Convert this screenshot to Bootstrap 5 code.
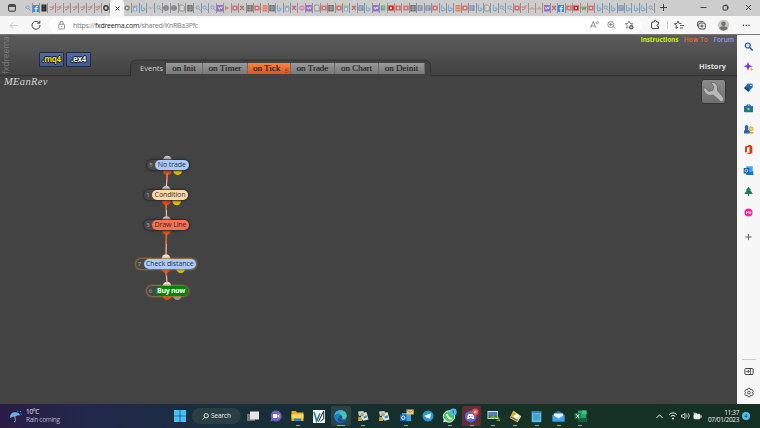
<!DOCTYPE html>
<html lang="en">
<head>
  <meta charset="UTF-8" />
  <meta name="viewport" content="width=device-width, initial-scale=1.0" />
  <title>fxDreema - MEanRev</title>
  <link href="https://cdn.jsdelivr.net/npm/bootstrap@5.3.2/dist/css/bootstrap.min.css" rel="stylesheet">
  <style>
    body {
      width: 760px;
      height: 428px;
      font-family: "Open Sans", sans-serif;
      font-size: 7px;
      line-height: 1;
      background: #434343;
    }
    svg { display: block; flex: none; }
    .line-icon { fill: none; stroke: currentColor; stroke-width: 1; }

    /* Browser chrome */
    .tab-strip { height: 16px; background: #cdcdcd; color: #333; }
    .tab-menu { width: 25px; }
    .tabs-left { width: 85px; }
    .tabs-mid { width: 78px; }
    .tabs-right { width: 453px; }
    .mini-tab { flex: 1 1 0; min-width: 0; height: 10px; border-right: 1px solid #929292; }
    .mini-tab svg { opacity: .88; }
    .live-tab { width: 14px; height: 16px; background: #f7f7f7; border-radius: 3px 3px 0 0; }
    .tool-row { height: 19px; background: #f7f7f7; border-bottom: 1px solid #777; color: #444; }
    .tool-nav { width: 49px; padding-left: 9px; gap: 12px; }
    .address { width: 593px; height: 15px; background: #fff; border-radius: 8px; padding: 0 7px 0 8px; }
    .address-text { color: #75797d; font-size: 7px; letter-spacing: -.25px; margin-left: 7px; }
    .address-text b { color: #222; font-weight: 400; }

    /* Editor page */
    .editor { width: 737px; height: 369px; background: #434343; }
    .editor-top { height: 41px; background: linear-gradient(#5c5c5c, #414141); }
    .editor-frame { z-index: 0; }
    .layer { position: relative; z-index: 1; }
    .brand { width: 12px; height: 39px; writing-mode: vertical-rl; transform: rotate(180deg); color: #7d7d7d; font-size: 8.4px; text-align: left; line-height: 12px; }
    .file-btns { padding: 17px 0 0 27px; gap: 2px; width: 128px; }
    .file-btn { width: 25px; height: 15px; background: linear-gradient(#4d6ca8, #3e5a92); border: 1px solid #252d3c; border-radius: 1px; font-size: 8px; line-height: 12px; font-weight: 700; letter-spacing: -.25px; color: #eee; text-align: center;
      text-shadow: -1px 0 #111, 1px 0 #111, 0 -1px #111, 0 1px #111; }
    .mq { color: #f4e01c; }
    .event-row { padding-top: 28px; width: 285px; }
    .event-title { width: 26px; color: #d0d0d0; font-size: 7.5px; line-height: 10px; }
    .event-tab { height: 11px; background: linear-gradient(#999, #797979); border-right: 1px solid #696969; color: #333; font-family: "Liberation Serif", serif; font-size: 9px; line-height: 11px; text-align: center; text-shadow: 0 0 .5px #333; white-space: nowrap; }
    .event-on { background: linear-gradient(#f98448, #e2531a); text-align: left; padding-left: 5px; }
    .w-init { width: 37px; } .w-timer { width: 45px; } .w-tick { width: 43px; } .w-trade { width: 44px; } .w-deinit { width: 46px; }
    .top-right { width: 312px; padding-right: 3px; }
    .top-links { gap: 5.5px; padding-top: 1px; font-size: 6.5px; line-height: 7px; font-weight: 700; letter-spacing: -.14px; }
    .link-a { color: #c2f000; } .link-b { color: #ee6238; font-weight: 600; letter-spacing: .1px; } .link-c { color: #9694ee; font-weight: 600; letter-spacing: 0; }
    .history { color: #ddd; font-weight: 700; font-size: 7.4px; line-height: 9px; padding: 19px 8px 0 0; }
    .project { font-family: "Liberation Serif", serif; font-style: italic; font-size: 10.5px; line-height: 12px; color: #d4d4d4; padding-left: 4px; letter-spacing: .35px; }
    .wrench { margin: 3px 11px 0 0; }

    /* Blocks on the canvas */
    .wires { position: absolute; left: 0; top: 0; }
    .block { position: absolute; display: flex; height: 10px; border-radius: 5px; background: #484848; box-shadow: 0 0 2px 1px #292929; color: #aaa; font-size: 6px; line-height: 10px; z-index: 2; }
    .block-no { text-align: center; width: 8px; }
    .block-name { flex: 1; border-radius: 5px; font-size: 7px; line-height: 10px; letter-spacing: -.1px; text-align: center; color: #263344; white-space: nowrap; }
    .picked { box-shadow: 0 0 2px 1px #9c7837; }
    .blue { background: #abc9fb; } .cream { background: #ffd9a6; } .coral { background: #fa7350; color: #431b18; } .green { background: #078307; color: #fff; font-weight: 700; letter-spacing: -.3px; }
    .b1 { left: 147px; top: 125px; width: 41.5px; }
    .b2 { left: 144px; top: 155px; width: 44px; }
    .b3 { left: 144px; top: 185px; width: 45px; }
    .b4 { left: 135.5px; top: 223.5px; width: 60.5px; }
    .b5 { left: 146.5px; top: 251px; width: 41px; }

    /* Edge sidebar */
    .side { width: 23px; height: 369px; background: #f7f7f7; padding-top: 5.5px; color: #444; }
    .side-list { gap: 9.8px; }
    .side-end { gap: 10px; padding: 6px 0; border-top: 1px solid #ccc; width: 14px; }

    /* Windows taskbar */
    .taskbar { height: 24px; background: linear-gradient(90deg, #2b1c47 0, #21284a 90px, #192e3e 220px, #15302f 340px, #173225 560px, #142f24 760px); color: #eee; font-size: 6.5px; }
    .weather { width: 174px; padding-left: 10px; gap: 4px; line-height: 8px; letter-spacing: -.32px; }
    .weather span + span { color: #b9b9c8; }
    .search-box { width: 49px; height: 16px; border-radius: 8px; background: #293f43; margin: 0 2px 0 6px; gap: 2px; font-size: 6.5px; letter-spacing: -.1px; }
    .app { width: 21.77px; height: 24px; flex: none; position: relative; }
    .app.running::after { content: ""; position: absolute; bottom: 2px; left: 9px; width: 4px; height: 1px; background: #9aa; }
    .app.current::before { content: ""; position: absolute; inset: 2px 1px; background: #ffffff18; border-radius: 2px; }
    .app.current::after { left: 7px; width: 8px; background: #55c3f5; }
    .app.alert-app::before { content: ""; position: absolute; inset: 2px 1px; background: #632d35; border-radius: 2px; }
    .app svg { position: relative; }
    .tray { gap: 2px; }
    .clock { width: 35px; font-size: 6.5px; line-height: 7.5px; letter-spacing: -.35px; }
    .notice { width: 8px; height: 8px; background: #4cc2f5; color: #123; font-size: 5px; margin: 0 10px 0 1px; }
  </style>
</head>
<body class="overflow-hidden">

<!-- Favicon shapes used in the tab strip -->
<svg width="0" height="0" class="position-absolute">
  <symbol id="fs" viewBox="0 0 6 8"><circle cx="2.6" cy="3.4" r="1.6" fill="none" stroke="#6d9cc8" stroke-width=".9"/><path d="M3.8 4.7 5.6 6.6" stroke="#6d9cc8"/></symbol>
  <symbol id="ff" viewBox="0 0 6 8"><path d="M0 1h6v7H0z" fill="#1685f0"/><path d="M5 2.2H4q-1 0-1 1V8M1.6 4.6h3" fill="none" stroke="#fff" stroke-width="1.1"/></symbol>
  <symbol id="fk" viewBox="0 0 6 8"><path d="M.5.5h5v7h-5z" fill="#161616"/><path d="M2 2h2M2 5h2" stroke="#777" stroke-width=".7"/></symbol>
  <symbol id="fz" viewBox="0 0 6 8"><path d="m.5 3 2 .3L5.5 1.5M1 6l2.3-.7L5 3.3" fill="none" stroke="#d3655c" stroke-width=".9"/><path d="m3 4 2-1" stroke="#6a9a68" stroke-width=".7"/></symbol>
  <symbol id="fo" viewBox="0 0 6 8"><circle cx="3" cy="4" r="2.2" fill="none" stroke="#222" stroke-width="1.4"/></symbol>
  <symbol id="fc" viewBox="0 0 6 8"><circle cx="3" cy="4" r="2" fill="none" stroke="#777" stroke-width="1.3"/></symbol>
  <symbol id="fd" viewBox="0 0 6 8"><path d="M.6 1h4.8v6.5H.6z" fill="#88acd9"/><path d="M1 1.6h4" stroke="#d6bd5e" stroke-width="1"/><path d="M2 4h2v2.5H2z" fill="#d5e0ee"/></symbol>
  <symbol id="fb" viewBox="0 0 6 8"><path d="M1.5.8v5.4l1.3.8 2-1.2V4.6L2.7 3.8" fill="none" stroke="#66a9e0" stroke-width="1.1"/></symbol>
  <symbol id="fw" viewBox="0 0 6 8"><path d="m.3 4.3 1.3-1 1.5 1.2 1.3-1.2 1.3 1" fill="none" stroke="#809ecb" stroke-width=".8"/></symbol>
  <symbol id="fg" viewBox="0 0 6 8"><circle cx="3" cy="4" r="2.7" fill="#5f5f5f"/><path d="M.8 3h4.4M.8 5h4.4M3 1.5v5" stroke="#bbb" stroke-width=".6"/></symbol>
  <symbol id="fp" viewBox="0 0 6 8"><path d="M.8 1h3l1.5 1.5V7H.8z" fill="#d8d8d8" stroke="#777" stroke-width=".7"/></symbol>
  <symbol id="fe" viewBox="0 0 6 8"><path d="M.3 1h5.4v6.4H.3z" fill="#5c5c5c"/><path d="M1 3h4M1 5.2h4M3 1v6" stroke="#b5b5b5" stroke-width=".7"/></symbol>
  <symbol id="fv" viewBox="0 0 6 8"><path d="M0 1h6v6.5H0z" fill="#9465c8"/><path d="m1 3 1.3 2.3L3.4 3l.8 2 1-2.4" fill="none" stroke="#eee" stroke-width=".8"/></symbol>
  <symbol id="fa" viewBox="0 0 6 8"><path d="m1 1.5 4 2.5-4 2.5z" fill="#d9855a"/></symbol>
  <symbol id="fr" viewBox="0 0 6 8"><path d="M.3 1.5h5.4v5H.3z" fill="#dc6464"/><path d="M2 3h2v2H2z" fill="#f0c3c3"/></symbol>
  <symbol id="fR" viewBox="0 0 6 8"><path d="M.3 1.5h5.4v5H.3z" fill="#f00000"/><path d="M2 3h2v2H2z" fill="#fff"/></symbol>
  <symbol id="fx" viewBox="0 0 6 8"><path d="m1 2 4 4M5 2 1 6" stroke="#c05f68" stroke-width="1.1"/><path d="M3 1.5v2" stroke="#6474a5"/></symbol>
  <symbol id="fy" viewBox="0 0 6 8"><path d="M.5 1h5v6.5h-5z" fill="#dd7959"/><path d="M1 3h4M1 5.5h4" stroke="#e8c08d" stroke-width=".7"/></symbol>
  <symbol id="fm" viewBox="0 0 6 8"><circle cx="3" cy="4" r="2.6" fill="#da7cb1"/><path d="M1.5 4h3" stroke="#f2d2e3"/></symbol>
  <symbol id="fq" viewBox="0 0 6 8"><path d="M.4 1.3h5.2v5.4H.4z" fill="#7289b5"/><path d="M1.4 3h3M1.4 5h2" stroke="#ccd7ea" stroke-width=".8"/></symbol>
  <symbol id="fn" viewBox="0 0 6 8"><path d="M.7 1.5h4.6v5H.7z" fill="#64a37c"/><path d="M2 3h2v2" fill="none" stroke="#aad0b9" stroke-width=".8"/></symbol>
  <symbol id="fh" viewBox="0 0 6 8"><path d="M.5 4.8h5M2 4l2-1" stroke="#dd8262" stroke-width=".9"/></symbol>
  <symbol id="fl" viewBox="0 0 6 8"><path d="m.8 2.5 1 3L3 3.7l1.2 1.8 1-3" fill="none" stroke="#43a65c" stroke-width="1.2"/><path d="M3 2.5v2" stroke="#d44"/></symbol>
</svg>

<div class="tab-strip d-flex align-items-center">
  <div class="tab-menu ps-2"><svg width="8" height="8" viewBox="0 0 8 8" class="line-icon"><rect x=".6" y=".6" width="6.8" height="6.6" rx="1"/><path d="M.6 2h6.8" stroke-width="1.6"/></svg></div>
  <div class="tabs-left d-flex" data-tabs="sfkzzzzzzzo"></div>
  <div class="live-tab d-flex align-items-center justify-content-center"><svg width="5" height="5" viewBox="0 0 5 5" class="line-icon"><path d="m.6.6 3.8 3.8M4.4.6.6 4.4"/></svg></div>
  <div class="tabs-mid d-flex" data-tabs="cdbwsggpes"></div>
  <div class="tabs-right d-flex" data-tabs="ssvarxeryebdxmvprerdxqbvnRrreqqrbbyrqbpbssrzhhvxfrRlrbsbqbbbs"></div>
  <svg width="105" height="16" viewBox="655 0 105 16" class="line-icon"><path d="M660 7.5h7M663.5 4v7M700.5 7.5h6M746 5l5 5M751 5l-5 5" stroke-width=".9"/><rect x="723" y="5.7" width="4.4" height="4.4" rx="1"/><path d="M724.5 5.2q3.8-1 3.8 3.3" stroke-width=".8"/></svg>
</div>

<div class="tool-row d-flex align-items-center">
  <div class="tool-nav d-flex align-items-center">
    <svg width="10" height="9" viewBox="0 0 10 9" class="line-icon"><path d="M9 4.5H1M4.5 1 1 4.5 4.5 8" stroke="#c9c9c9"/></svg>
    <svg width="10" height="10" viewBox="0 0 10 10" class="line-icon"><path d="M8.3 3A4 4 0 1 0 9 5M8.800.6v2.6H6.2"/></svg>
  </div>
  <div class="address d-flex align-items-center">
    <svg width="9" height="9" viewBox="0 0 9 9" class="line-icon"><rect x="1.7" y="3.3" width="5.8" height="4.6" rx=".7" stroke="#777" stroke-width=".8"/><path d="M3 3.2V2a1.6 1.6 0 0 1 3.2 0v1.2M4.6 5v1" stroke="#777" stroke-width=".8"/></svg>
    <span class="address-text">https://<b>fxdreema.com</b>/shared/KnRBa3Pfc</span>
    <svg width="48" height="12" viewBox="587 19 48 12" class="line-icon ms-auto"><path d="m590.5 28 2.7-6.5L596 28M591.4 26h3.6M596 22q1 1 0 2M597.5 21q1.5 1.5 0 3.300M613.3 26.7l2 2M609 24.500h3.600M610.8 22.700v3.600" stroke="#666" stroke-width=".7"/><circle cx="610.8" cy="24.5" r="3" stroke="#666" stroke-width=".7"/><path d="m629 21 1.1 2.400 2.700.3-2 1.800M629 21l-1.100 2.400-2.700.3 2 1.800-.5 2.700 2-1" stroke="#666" stroke-width=".8"/><circle cx="631.3" cy="27.2" r="2.2" fill="#555" stroke="none"/><path d="M631.3 26v2.400M630.1 27.200h2.400" stroke="#fff" stroke-width=".6"/></svg>
  </div>
  <svg width="118" height="14" viewBox="642 18 118 14" class="line-icon">
    <path d="M652 22h2.200q-.2-1.700 1.100-1.700t1.200 1.700h2v2.200q-1.500 0-1.500 1.200t1.500 1.200v2h-6.300l-.7-1.600v-3.200z"/>
    <path d="M667.5 21v8" stroke="#ccc"/>
    <path d="m678 21 1 2.400h2.500M678 21l-1.100 2.400-2.400.3 1.800 1.900-.4 2.800 2.200-1.200M680 25.500h4M680 28h3" stroke-width=".9"/>
    <rect x="698.8" y="23" width="6.5" height="6" rx="1.2"/><path d="M697.6 26.500v-3.300q0-1.800 1.800-1.800h4M702 24.300v3.400M700.3 26h3.400" stroke-width=".9"/>
    <g stroke="none"><circle cx="723.5" cy="25.3" r="5.6" fill="#c9c7c5"/><circle cx="723.5" cy="23.7" r="2.2" fill="#75706c"/><path d="M719.3 28.600q.5-2.300 4.200-2.300t4.200 2.300q-4.200 4.200-8.400 0" fill="#75706c"/>
    <g fill="#333"><circle cx="743.4" cy="25.3" r=".7"/><circle cx="746.2" cy="25.3" r=".7"/><circle cx="749" cy="25.3" r=".7"/></g></g>
  </svg>
</div>

<div class="d-flex">
  <main class="editor position-relative">
    <div class="editor-top d-flex">
      <svg class="position-absolute top-0 start-0 editor-frame" width="737" height="48" viewBox="0 0 737 48"><path d="M0 48V40.700h130.500V32q0-7 7-7h286q7 0 7 7v8.700H737V48z" fill="#434343"/><path d="M0 40.700h130.500V32q0-7 7-7h286q7 0 7 7v8.700H737" fill="none" stroke="#303030"/></svg>
      <div class="brand layer">fxdreema</div>
      <div class="file-btns layer d-flex"><div class="file-btn mq">.mq4</div><div class="file-btn">.ex4</div></div>
      <div class="event-row layer d-flex">
        <div class="event-title">Events</div>
        <div class="event-tab w-init">on Init</div>
        <div class="event-tab w-timer">on Timer</div>
        <div class="event-tab event-on w-tick d-flex">on Tick<svg width="6" height="11" viewBox="0 0 6 11" class="line-icon ms-auto"><path d="M1.500 6h3M1.500 6v1.600q2.800-.7 2.700 1T.8 9.500" stroke="#8f4c2e" stroke-width=".8"/></svg></div>
        <div class="event-tab w-trade">on Trade</div>
        <div class="event-tab w-trade">on Chart</div>
        <div class="event-tab w-deinit">on Deinit</div>
      </div>
      <div class="top-right layer d-flex flex-column align-items-end">
        <div class="top-links d-flex"><span class="link-a">Instructions</span><span class="link-b">How To</span><span class="link-c">Forum</span></div>
        <div class="history">History</div>
      </div>
    </div>
    <div class="layer d-flex justify-content-between">
      <div class="project">MEanRev</div>
      <svg class="wrench" width="25" height="25" viewBox="0 0 25 25"><defs><linearGradient id="wg" x2="0" y2="1"><stop stop-color="#8b8b8b"/><stop offset="1" stop-color="#707070"/></linearGradient></defs><rect x=".5" y=".5" width="24" height="24" rx="2.5" fill="url(#wg)" stroke="#353535"/><path d="M9.800 3.300q3.200-.5 5.600 2 2 2.500 1 6l6.300 7.700q1 3-2.500 4l-8-7q-4.500 1.300-7.700-1.600Q1.800 11.500 3 7.800l5 4.700 3.900-1.300.7-3.600z" fill="#b9b9b9" stroke="#5e5e5e" stroke-width=".7"/></svg>
    </div>

    <svg class="wires" width="220" height="300" viewBox="0 35 220 300">
      <g fill="#c9bfcc"><circle cx="167.3" cy="160" r="4.3"/><circle cx="166.3" cy="190" r="4.3"/><circle cx="166.5" cy="220.5" r="4.3"/></g>
      <g fill="#f5dfd3"><circle cx="166" cy="258.5" r="4.3"/><circle cx="167" cy="286" r="4.3"/></g>
      <g fill="#de4e10"><circle cx="167.3" cy="170.7" r="4.3"/><circle cx="166.3" cy="201" r="4.3"/><circle cx="166.5" cy="230.5" r="4.3"/><circle cx="166" cy="268.7" r="4.3"/><circle cx="167" cy="295.7" r="4.3"/></g>
      <g fill="#e2b809"><circle cx="177.7" cy="170.7" r="4.3"/><circle cx="176.7" cy="201" r="4.3"/><circle cx="180.7" cy="268.7" r="4.3"/></g>
      <circle cx="177.3" cy="295.7" r="4.3" fill="#9a9a94"/>
      <g stroke="#efb29b" stroke-width="1.3"><path d="m167.3 174-1 13M166.3 205l.2 12M166.5 234l-.5 21M166.2 272l.8 11"/></g>
      <g stroke="#df6535" stroke-width="1.3"><path d="m167.3 173-.5 6M166.3 204v6M166.5 234l-.2 10M166.2 271l.4 5"/></g>
    </svg>
    <div class="block b1"><span class="block-no">5</span><span class="block-name blue">No trade</span></div>
    <div class="block b2"><span class="block-no">1</span><span class="block-name cream">Condition</span></div>
    <div class="block b3"><span class="block-no">3</span><span class="block-name coral">Draw Line</span></div>
    <div class="block b4 picked"><span class="block-no">7</span><span class="block-name blue">Check distance</span></div>
    <div class="block b5 picked"><span class="block-no">6</span><span class="block-name green">Buy now</span></div>
  </main>

  <aside class="side d-flex flex-column align-items-center">
    <div class="side-list d-flex flex-column">
      <svg width="11" height="11" viewBox="0 0 11 11"><circle cx="4.8" cy="4.5" r="2.5" fill="#cfe6fb" stroke="#2355b4" stroke-width="1.2"/><path d="m6.700 6.500 3 3" stroke="#2355b4" stroke-width="1.5"/></svg>
      <svg width="11" height="11" viewBox="0 0 11 11"><path d="M5 .8 6.200 4 9.500 5.200 6.200 6.400 5 9.700 3.800 6.400.6 5.200 3.800 4z" fill="#7a3be0"/><path d="m8.500 6.300.6 1.500 1.500.6-1.500.6-.6 1.500-.6-1.500-1.500-.6 1.500-.6z" fill="#efb631"/></svg>
      <svg width="11" height="11" viewBox="0 0 11 11"><path d="m5 1.500 4.500.2.300 3.600-4.600 4.400L1.200 6z" fill="#1c65b8"/><path d="m1.200 6 4 3.700 1.500-1.400-4-3.700z" fill="#124780"/><circle cx="8" cy="3.4" r=".8" fill="#e5e5e5"/></svg>
      <svg width="11" height="11" viewBox="0 0 11 11"><path d="M4 3V2h3.200v1" fill="none" stroke="#155d8c"/><rect x="1" y="3" width="9" height="6.3" rx=".8" fill="#137d83"/><path d="M1 3h9v3H1z" fill="#1c70b9"/><path d="M4.500 5h2v2h-2z" fill="#ebbc38"/></svg>
      <svg width="11" height="11" viewBox="0 0 11 11"><path d="M3.600 1q2 .3 1.800 2.500L5 5.500l1.800 1.200v2.800H1V6.700l1.200-1.200-.5-2Q1.600 1.300 3.600 1" fill="#2265bd"/><circle cx="8" cy="4.8" r="2.5" fill="#eeb942"/><circle cx="8" cy="4.8" r=".9" fill="#fae3a0"/><path d="M6.800 9.500h3.500V8.200H6.800z" fill="#d28b24"/></svg>
      <svg width="11" height="11" viewBox="0 0 11 11"><path d="M6.500.8 9.300 2v7l-2.800 1.200L2.500 9l4-.2V2.700L4 3.500v4.300l-2 .8V2.700z" fill="#dd3c16"/></svg>
      <svg width="11" height="11" viewBox="0 0 11 11"><path d="M3.300 1.300H9.700v8H3.300z" fill="#38a6e8"/><path d="m3.300 6 3.500 1.700L10.300 6v4h-7z" fill="#1b71c4"/><path d="M.7 3h5.500v5.500H.7z" fill="#0b5dab"/><circle cx="3.4" cy="5.7" r="1.4" fill="none" stroke="#fff" stroke-width=".8"/></svg>
      <svg width="11" height="11" viewBox="0 0 11 11"><path d="M5.500.8 8 4H7.300L9.800 8H1.300L3.800 4H3z" fill="#157f57"/><path d="M5 8h1.200v2.300H5z" fill="#6f5943"/></svg>
      <svg width="11" height="11" viewBox="0 0 11 11"><circle cx="5.5" cy="5.5" r="4" fill="#ee249e"/><path d="M3.500 7V4.500L5 6l1-1.800v2.600l1.700-2.300v2.300" fill="none" stroke="#ffd7ef" stroke-width=".8"/></svg>
      <svg width="11" height="11" viewBox="0 0 11 11" class="line-icon mt-1"><path d="M5.500 1.800v6.400M2.300 5h6.400" stroke="#666"/></svg>
    </div>
    <div class="side-end mt-auto d-flex flex-column align-items-center">
      <svg width="10" height="11" viewBox="0 0 10 11" class="line-icon"><rect x=".9" y="2.5" width="8.2" height="6" rx="1"/><path d="M6.500 2.500v6M2 5.500h3M4 4l1.300 1.500L4 7" stroke-width=".8"/></svg>
      <svg width="10" height="11" viewBox="0 0 10 11" class="line-icon"><path d="m4 1.300 2 0 .5 1.500 1.600-.3L9.300 4.500 8.200 5.600 9.300 7 8.100 8.700l-1.600-.4L6 9.800H4l-.5-1.500-1.600.4L.7 7l1.100-1.400L.7 4.500l1.200-2 1.600.3z" stroke-width=".9"/><circle cx="5" cy="5.6" r="1.4" stroke-width=".9"/></svg>
    </div>
  </aside>
</div>

<footer class="taskbar d-flex align-items-center">
  <div class="weather d-flex align-items-center">
    <svg width="12" height="13" viewBox="0 0 12 13"><path d="M0 8Q-.2 3.200 4 2.300t6.500 3.200Q7.800 5 5.500 6.300 3 6.300 0 8" fill="#62b5f2"/><path d="m4.800 6 .6 4.600q.1 1.500-1.400 1.200" fill="none" stroke="#9fb0c0" stroke-width=".9"/><path d="m7.500.8.700 1M10 .8l.7 1M10.700 3.500l.7 1" stroke="#5aaeff"/></svg>
    <div class="d-flex flex-column"><span>10°C</span><span>Rain coming</span></div>
  </div>
  <svg width="12" height="12" viewBox="0 0 12 12"><path d="M0 0h5.700v5.700H0zM6.300 0H12v5.700H6.300zM0 6.300h5.700V12H0zM6.300 6.300H12V12H6.300z" fill="#46c1f5"/></svg>
  <div class="search-box d-flex align-items-center justify-content-center"><svg width="7" height="7" viewBox="0 0 7 7" class="line-icon"><circle cx="4.2" cy="2.8" r="2.2"/><path d="M2.600 4.400.5 6.500"/></svg>Search</div>

  <div class="app d-flex align-items-center justify-content-center"><svg width="13" height="12" viewBox="0 0 13 12"><path d="M0 4h8v7H0z" fill="#777"/><path d="M3 1.500h9v8H3z" fill="#e4e4e4"/></svg></div>
  <div class="app d-flex align-items-center justify-content-center"><svg width="12" height="12" viewBox="0 0 12 12"><path d="M6 .5a5.500 5.500 0 1 1-3 10L.5 11.500l.7-3A5.500 5.500 0 0 1 6 .5" fill="#7461c2"/><path d="M3 4h4.200v4H3zM7.600 5.500 9.300 4v4L7.600 6.500z" fill="#fff"/></svg></div>
  <div class="app running d-flex align-items-center justify-content-center"><svg width="13" height="12" viewBox="0 0 13 12"><path d="M.5 1h4.300L6 2.400h6.500V11H.5z" fill="#edab1e"/><path d="M.5 4.200h12v4.300H.5z" fill="#ffd957"/><path d="M3 8.500h7V11H3z" fill="#2586d6"/></svg></div>
  <div class="app d-flex align-items-center justify-content-center"><svg width="12" height="13" viewBox="0 0 12 13"><path d="M0 0h12v13H0z" fill="#f4f7f6"/><path d="m1 2 2.700 9L7 3.500" fill="none" stroke="#247e8c" stroke-width="1.6"/><path d="M5.500 11.500 10.700 1v8q-1.800 1-3 2.500" fill="none" stroke="#152b31"/></svg></div>
  <div class="app running current d-flex align-items-center justify-content-center"><svg width="13" height="13" viewBox="0 0 13 13"><circle cx="6.5" cy="6.5" r="6.3" fill="#1683c9"/><path d="M.3 5.500Q1.500.2 7 .2q5.700.6 5.800 5.800-.4 3-3.800 2.800Q7 8.300 8 7 8 4 5 3.500 2 3.300.3 5.500" fill="#48c4b0"/><path d="M.3 5.500Q1.500.2 7 .2q2.500.3 4 2Q7.500 1 4 3 1.600 3.500.3 5.500" fill="#39a8e6"/><path d="M5.200 7q.5 3.500 6.500 3Q8.500 13.500 4.500 11.500 2.800 9 5.200 7" fill="#125193"/><path d="M5.500 6.500Q5.800 8.500 8 8.700q-.9-.9 0-1.700-.8-2-2.500-.5" fill="#173033"/></svg></div>
  <div class="app running d-flex align-items-center justify-content-center"><svg width="12" height="12" viewBox="0 0 12 12"><path d="m1 1.500 5.500-.5 1 4L2 6z" fill="#b9d7de"/><path d="m6 3 3.500-1 2 7.500-5 1.200-3-3.200z" fill="#dce3de"/><circle cx="5.200" cy="4.500" r="1.700" fill="#d19a4d"/><path d="M1.500 6.500 5 8v3H1z" fill="#d8a643"/><path d="M6.500 6.500 9.500 5l.5 2.500-3 1z" fill="#4389b5"/></svg></div>
  <div class="app d-flex align-items-center justify-content-center"><svg width="12" height="12" viewBox="0 0 12 12"><path d="m1 1.500 5.500-.5 1 4L2 6z" fill="#b9d7de"/><path d="m6 3 3.500-1 2 7.500-5 1.200-3-3.200z" fill="#dce3de"/><circle cx="5.200" cy="4.500" r="1.700" fill="#d19a4d"/><path d="M1.500 6.500 5 8v3H1z" fill="#d8a643"/><path d="M6.500 6.500 9.500 5l.5 2.500-3 1z" fill="#4389b5"/></svg></div>
  <div class="app running d-flex align-items-center justify-content-center"><svg width="15" height="14" viewBox="0 0 15 14"><path d="M3 4h9v8H3z" fill="#40a5e4"/><path d="M1 5.500h6.500V12H1z" fill="#1366b9"/><circle cx="4.3" cy="8.7" r="1.7" fill="none" stroke="#fff"/><path d="M7.500.5h7.200v5H7.500z" fill="#edc285"/><path d="m7.500.7 3.600 2.700L14.700.7" fill="none" stroke="#a67542" stroke-width=".7"/></svg></div>
  <div class="app d-flex align-items-center justify-content-center"><svg width="12" height="12" viewBox="0 0 12 12"><circle cx="6" cy="6" r="5.5" fill="#2799d4"/><path d="m2 6 7-2.800L8 9 5.800 7.400 4.600 8.600 4.400 7z" fill="#fff"/></svg></div>
  <div class="app running d-flex align-items-center justify-content-center"><svg width="15" height="16" viewBox="0 0 15 16"><circle cx="7" cy="8.5" r="5.7" fill="#43c85e" stroke="#eefaf0"/><path d="M1 14.500 2.300 10.500 5 13z" fill="#eefaf0"/><path d="M4.800 6q1 4.400 5 5" fill="none" stroke="#fff" stroke-width="1.7"/><circle cx="11.3" cy="4" r="3.4" fill="#4abdf0"/><path d="M11.300 2.500v3" stroke="#13374b" stroke-width=".8"/></svg></div>
  <div class="app running alert-app d-flex align-items-center justify-content-center"><svg width="15" height="16" viewBox="0 0 15 16"><circle cx="6.7" cy="8.5" r="5.7" fill="#5868e5"/><path d="M3.200 10.700q0-3.700 1.500-4.600h4q1.500.9 1.500 4.600l-1.700.6-.5-1H5.400l-.5 1z" fill="#fff"/><path d="M5 8.500h1M7.500 8.500h1" stroke="#5868e5"/><circle cx="11.3" cy="4" r="3.4" fill="#df504f"/><circle cx="11.3" cy="4" r="1.3" fill="#ffdad8"/></svg></div>
  <div class="app running d-flex align-items-center justify-content-center"><svg width="13" height="12" viewBox="0 0 13 12"><path d="M.5 1h10.500v8H.5z" fill="#d8e3ed"/><path d="M1.300 2h9v3h-9z" fill="#527eb7"/><path d="M1.300 5h9v3h-9z" fill="#587b3e"/><path d="m4 8 2.500-2 1 2L11 7l1.500 3.500-3-.5" fill="none" stroke="#78ad37" stroke-width="1.2"/></svg></div>
  <div class="app running d-flex align-items-center justify-content-center"><svg width="13" height="13" viewBox="0 0 13 13"><path d="m4.500.7 7.800 5.500-3.800 6L.7 8z" fill="#eadf9c"/><path d="m4 1.500 4 2.800L6 8 2 5.300z" fill="#cab12c"/><path d="m4 6 4-2 2.500 2L7 8.500z" fill="#fff"/><path d="m1 7.500 7 3.700 1-1.500-7-3.500z" fill="#9e6c38"/></svg></div>
  <div class="app running d-flex align-items-center justify-content-center"><svg width="11" height="13" viewBox="0 0 11 13"><rect x=".7" y="1" width="9.6" height="11.3" rx="1" fill="#58bce8"/><path d="M.7 1h9.600v2H.7z" fill="#2584ba"/><path d="M2.500 5h6M2.500 7h6M2.500 9h6" stroke="#2377a8" stroke-width=".8"/></svg></div>
  <div class="app running d-flex align-items-center justify-content-center"><svg width="13" height="12" viewBox="0 0 13 12"><path d="M.5 4.500 6.500.5l6 4v7H.5z" fill="#1971c8"/><path d="M2 3.500h9v4L6.500 9 2 7z" fill="#f0f8fc"/><path d="m.5 4.800 6 3.700 6-3.700v6.700H.5z" fill="#3ba7ed"/></svg></div>
  <div class="app running d-flex align-items-center justify-content-center"><svg width="13" height="12" viewBox="0 0 13 12"><path d="M4 .5h8.500v11H4z" fill="#28a168"/><path d="M8.200.5h4.300v3.700H8.200z" fill="#43c687"/><path d="M4 8h8.500v3.500H4z" fill="#145d37"/><path d="M.5 3h6.300v6.200H.5z" fill="#127940"/><path d="m2.200 4.300 2.900 3.600M5.100 4.300 2.200 7.900" stroke="#fff"/></svg></div>

  <div class="tray d-flex align-items-center ms-auto">
    <svg width="48" height="12" viewBox="654 410 48 12" class="line-icon"><path d="m656.5 418 3-3.300 3 3.300M669.3 414.500q3.700-3.300 7.400 0M670.700 416.300q2.300-2 4.600 0"/><circle cx="673" cy="418.500" r="1" fill="#eee" stroke="none"/><path d="M681.500 415h1.500l2-1.700v5.500l-2-1.700h-1.500zM686.500 414.500q1.200 1.500 0 3M688.200 413.200q2.200 2.800 0 5.600" stroke-width=".8"/><rect x="694" y="414.300" width="6" height="4.500" rx=".8" fill="#eee"/><path d="M701.200 415.500v2M693.500 413l3 .5v2.200" stroke-width=".9"/></svg>
    <div class="clock d-flex flex-column align-items-end"><span>11:37</span><span>07/01/2023</span></div>
    <div class="notice rounded-circle d-flex align-items-center justify-content-center">4</div>
  </div>
</footer>

<script src="https://cdn.jsdelivr.net/npm/bootstrap@5.3.2/dist/js/bootstrap.bundle.min.js"></script>
<script>
  // One letter per open tab, matching the favicon symbols above
  document.querySelectorAll('[data-tabs]').forEach(strip => {
    strip.innerHTML = [...strip.dataset.tabs].map(id =>
      `<div class="mini-tab d-flex align-items-center justify-content-center"><svg width="6" height="8"><use href="#f${id}"/></svg></div>`
    ).join('');
  });
</script>
</body>
</html>
